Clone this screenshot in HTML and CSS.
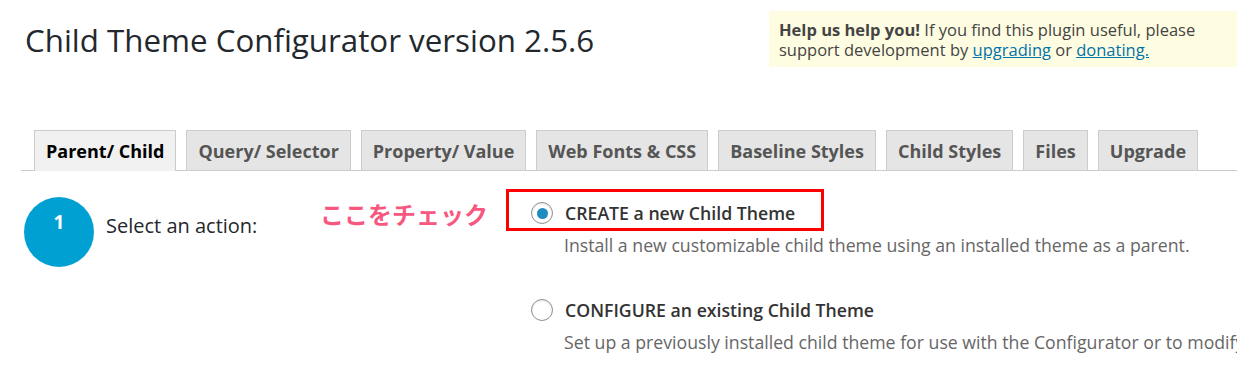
FILE: index.html
```html
<!DOCTYPE html>
<html lang="en">
<head>
<meta charset="utf-8">
<title>Child Theme Configurator</title>
<link rel="stylesheet" href="styles.css">
</head>
<body>
<div class="page">
  <header class="header">
    <h1 class="title">Child Theme Configurator version 2.5.6</h1>
    <div class="notice">
      <strong>Help us help you!</strong> If you find this plugin useful, please support development by <a href="#">upgrading</a> or <a href="#">donating.</a>
    </div>
  </header>

  <nav class="tabs">
    <span class="tab active">Parent/ Child</span>
    <span class="tab">Query/ Selector</span>
    <span class="tab">Property/ Value</span>
    <span class="tab">Web Fonts &amp; CSS</span>
    <span class="tab">Baseline Styles</span>
    <span class="tab">Child Styles</span>
    <span class="tab">Files</span>
    <span class="tab">Upgrade</span>
  </nav>

  <section class="step">
    <div class="step-num">1</div>
    <div class="step-label">Select an action:</div>
    <div class="annotation">ここをチェック</div>
    <div class="options">
      <div class="option highlighted">
        <span class="radio checked"></span>
        <span class="option-title">CREATE a new Child Theme</span>
      </div>
      <p class="option-desc">Install a new customizable child theme using an installed theme as a parent.</p>
      <div class="option second">
        <span class="radio"></span>
        <span class="option-title">CONFIGURE an existing Child Theme</span>
      </div>
      <p class="option-desc second-desc">Set up a previously installed child theme for use with the Configurator or to modify current settings.</p>
    </div>
  </section>
</div>
</body>
</html>
```

FILE: styles.css
```css
html, body {
  margin: 0;
  padding: 0;
  background: #ffffff;
  overflow: hidden;
}
body {
  font-family: "Open Sans", "Noto Sans", sans-serif;
  color: #23282d;
  width: 1237px;
  height: 379px;
}
.page {
  padding-left: 21px;
  overflow: hidden;
}
.header {
  display: flex;
  justify-content: space-between;
  align-items: flex-start;
  height: 130px;
}
.title {
  margin: 20px 0 0 4px;
  font-weight: 400;
  font-size: 31.3px;
  line-height: 40px;
  color: #23282d;
  white-space: nowrap;
}
.notice {
  flex-shrink: 0;
  margin-top: 11px;
  background: #fffde1;
  width: 448px;
  padding: 9px 10px 7px 10px;
  font-size: 16.5px;
  line-height: 20px;
  color: #444;
}
.notice strong {
  color: #444;
  font-weight: 700;
}
.notice a {
  color: #0073aa;
  text-decoration: underline;
}
.tabs {
  display: flex;
  gap: 10px;
  padding-left: 13px;
  border-bottom: 1px solid #cccccc;
  height: 40px;
}
.tab {
  flex-shrink: 0;
  box-sizing: border-box;
  height: 40px;
  padding: 0 11px;
  background: #e5e5e5;
  border: 1px solid #cccccc;
  border-bottom: none;
  font-weight: 700;
  font-size: 18px;
  line-height: 40px;
  color: #555555;
  white-space: nowrap;
}
.tab.active {
  background: #f1f1f1;
  color: #000000;
  height: 41px;
}
.step {
  display: flex;
  align-items: flex-start;
  margin-top: 18px;
}
.step-num {
  flex-shrink: 0;
  width: 70px;
  height: 70px;
  border-radius: 50%;
  background: #00a0d2;
  color: #fff;
  font-weight: 700;
  font-size: 19px;
  line-height: 50px;
  text-align: center;
  margin: 8px 0 0 3px;
}
.step-label {
  flex-shrink: 0;
  margin: 24px 0 0 12px;
  font-size: 20px;
  line-height: 26px;
  width: 214px;
  white-space: nowrap;
}
.annotation {
  flex-shrink: 0;
  margin: 0;
  padding-top: 10px;
  font-family: "Noto Sans CJK JP", sans-serif;
  font-weight: 700;
  font-size: 24px;
  line-height: 30px;
  color: #f7587f;
  width: 186px;
  white-space: nowrap;
}
.options {
  display: flex;
  flex-direction: column;
  min-width: 0;
  flex: 1;
  overflow: hidden;
}
.option {
  display: flex;
  align-items: center;
  gap: 12px;
  box-sizing: border-box;
  height: 42px;
  padding-left: 25px;
  margin-top: 8px;
}
.option.highlighted {
  margin-top: 0;
  width: 318px;
  border: 3px solid #ff0000;
  padding-left: 22px;
  padding-top: 6px;
}
.option.second {
  margin-top: 34px;
  height: 38px;
}
.radio {
  flex-shrink: 0;
  box-sizing: border-box;
  width: 22px;
  height: 22px;
  border-radius: 50%;
  border: 1px solid #8c8f94;
  background: #fff;
  box-shadow: inset 0 1px 2px rgba(0,0,0,0.1);
  display: flex;
  align-items: center;
  justify-content: center;
}
.radio.checked::after {
  content: "";
  width: 11px;
  height: 11px;
  border-radius: 50%;
  background: #1e8cbe;
}
.option-title {
  font-size: 17.7px;
  font-weight: 600;
  color: #333;
  white-space: nowrap;
}
.option-desc {
  margin: 2px 0 0 58px;
  font-size: 17.7px;
  line-height: 24px;
  color: #666;
  white-space: nowrap;
}
.option-desc.second-desc {
  margin-top: 1px;
}
```
